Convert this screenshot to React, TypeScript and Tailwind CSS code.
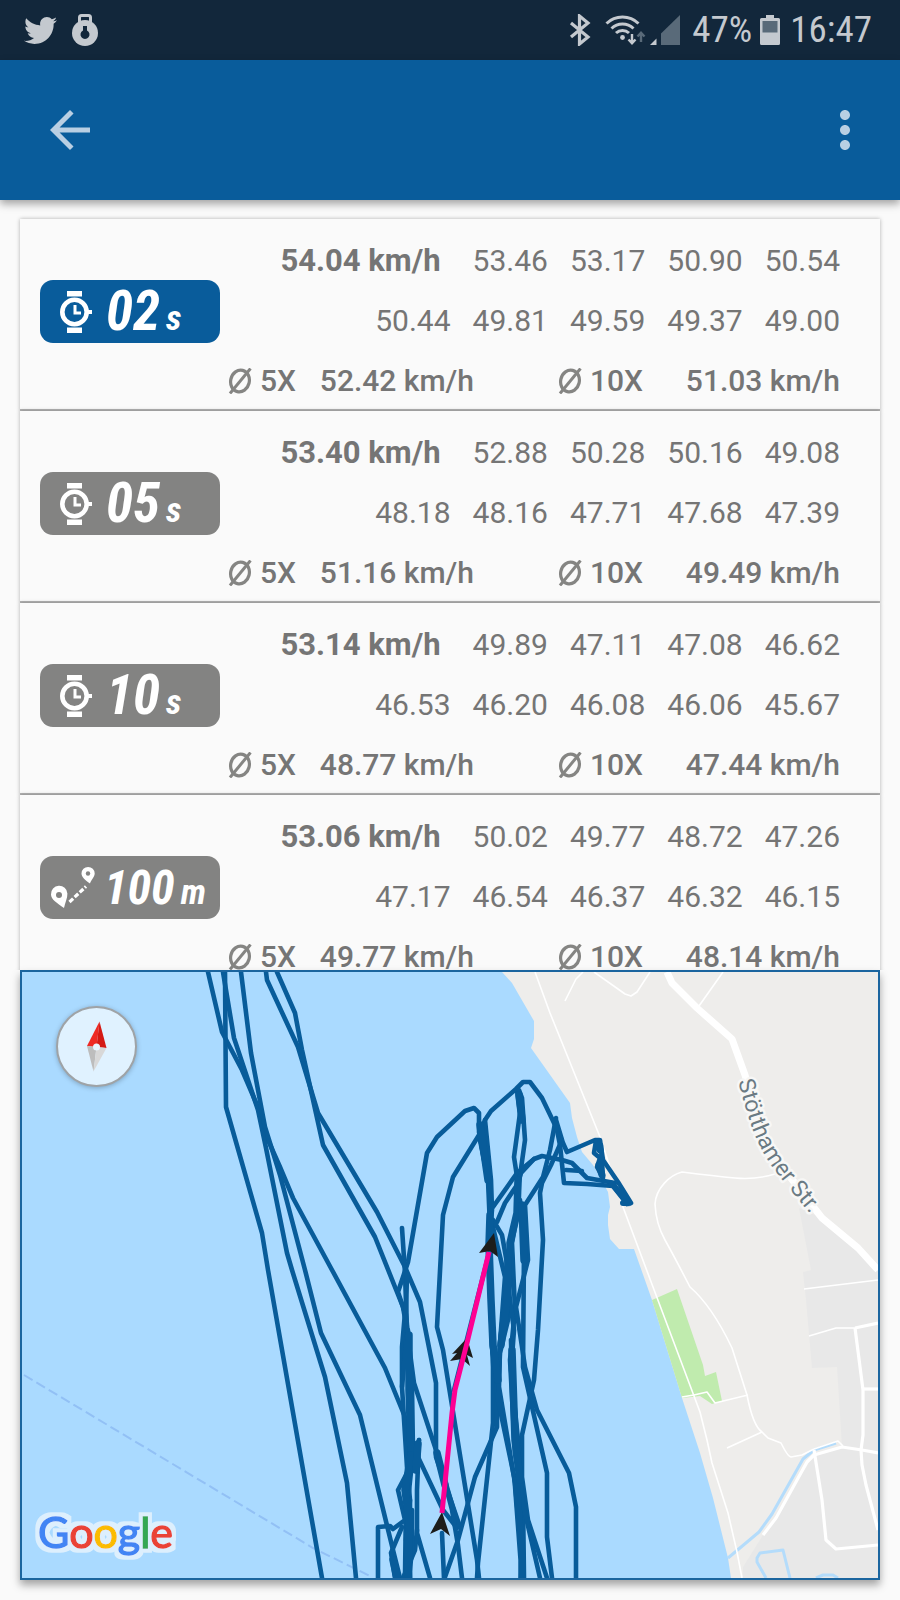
import React from 'react';
import { FaTwitter } from 'react-icons/fa';
import { MdArrowBack, MdMoreVert } from 'react-icons/md';

interface SpeedResult {
  id: string;
  kind: 'time' | 'distance';
  value: string;
  unit: string;
  active?: boolean;
  top: string;
  first: string[];
  second: string[];
  avg5: string;
  avg10: string;
}

const results: SpeedResult[] = [
  {
    id: '2s', kind: 'time', value: '02', unit: 's', active: true, top: '54.04 km/h',
    first: ['53.46', '53.17', '50.90', '50.54'],
    second: ['50.44', '49.81', '49.59', '49.37', '49.00'],
    avg5: '52.42 km/h', avg10: '51.03 km/h',
  },
  {
    id: '5s', kind: 'time', value: '05', unit: 's', top: '53.40 km/h',
    first: ['52.88', '50.28', '50.16', '49.08'],
    second: ['48.18', '48.16', '47.71', '47.68', '47.39'],
    avg5: '51.16 km/h', avg10: '49.49 km/h',
  },
  {
    id: '10s', kind: 'time', value: '10', unit: 's', top: '53.14 km/h',
    first: ['49.89', '47.11', '47.08', '46.62'],
    second: ['46.53', '46.20', '46.08', '46.06', '45.67'],
    avg5: '48.77 km/h', avg10: '47.44 km/h',
  },
  {
    id: '100m', kind: 'distance', value: '100', unit: 'm', top: '53.06 km/h',
    first: ['50.02', '49.77', '48.72', '47.26'],
    second: ['47.17', '46.54', '46.37', '46.32', '46.15'],
    avg5: '49.77 km/h', avg10: '48.14 km/h',
  },
];

// GPS track segments in map coordinates
const tracks = [
  '208,972 222,1032 242,1070 260,1112 268,1140 280,1167 293,1198 332,1270 385,1368 405,1417 408,1440',
  '225,972 226,1107 262,1233 268,1270 322,1578',
  '223,972 234,1038 258,1110 266,1148 287,1253 292,1270 325,1377 347,1483 356,1578',
  '241,972 251,1053 265,1127 280,1175 305,1270 321,1333 360,1415 393,1550 400,1578',
  '266,972 267,980 298,1047 318,1113 377,1212 405,1267 420,1302 436,1383 436,1457 460,1527',
  '277,972 295,1013 302,1050 323,1145 375,1237 403,1307 407,1330 414,1383 437,1453 458,1525',
  '402,1387 402,1347 405,1313 398,1292 408,1262 427,1153 437,1137 465,1111 474,1108 479,1113 479,1132 488,1180 490,1227 489,1267 493,1367 493,1423 478,1563 477,1578',
  '479,1578 477,1560 443,1350 437,1327 443,1215 453,1177 479,1135 485,1120 491,1111 516,1089 523,1082 530,1082 542,1098 555,1125 567,1152 595,1140 600,1140 603,1160 618,1182 631,1203',
  '517,1090 520,1113 514,1157 518,1183 517,1213 510,1243 507,1277 500,1343 499,1387 515,1483 522,1560 521,1578',
  '519,1090 522,1098 525,1140 519,1183 518,1210 512,1243 515,1310 510,1360 515,1453 523,1500 524,1578',
  '485,1120 491,1180 492,1210 489,1240 492,1347 497,1380 497,1427 475,1477 458,1540 445,1577',
  '480,1140 489,1185 490,1215 505,1277 500,1343 498,1380',
  '493,1207 517,1173 534,1159 542,1156 562,1160 572,1163 587,1178 615,1183',
  '497,1222 505,1203 517,1185 521,1173 534,1159',
  '493,1220 502,1235 510,1280 508,1320 500,1353 498,1400 519,1500',
  '556,1118 550,1150 543,1177 525,1205 528,1260 516,1307 525,1367 537,1410 569,1473 576,1507 576,1578',
  '556,1120 562,1140 551,1165 542,1183 540,1193 543,1240 538,1330 534,1380 522,1435 522,1477 528,1520 547,1578',
  '555,1120 560,1145 564,1183 587,1184 613,1186 627,1204',
  '566,1170 582,1171',
  '596,1141 594,1153 600,1158 597,1167 603,1178 601,1145',
  '520,1200 524,1250 523,1367 547,1473 547,1537 552,1578',
  '511,1340 512,1380 520,1470 522,1500 540,1578',
  '506,1270 514,1330 511,1370 519,1450',
  '402,1228 405,1273 407,1333 402,1387 407,1467 410,1500 406,1540',
  '407,1273 406,1313 412,1387 413,1453 408,1500 410,1578',
  '408,1330 410,1400 410,1453 406,1500 405,1578',
  '419,1440 414,1460 398,1490 405,1520 393,1529 390,1526 378,1527 378,1578',
  '419,1440 417,1490 417,1533 430,1578',
  '418,1457 443,1510 457,1528',
  '402,1527 391,1553 395,1578',
  '417,1530 415,1550 403,1578',
  '410,1500 410,1578',
  '412,1510 412,1550 409,1578',
  '437,1453 452,1510 458,1545 462,1578',
  '442,1533 444,1578',
  '489,1253 466,1343 454,1390',
];

// Stretches sailed so often that the lines merge
const busyTracks = [
  '490,1215 489,1245 491,1300 493,1345 498,1380',
  '480,1125 488,1180',
  '519,1095 522,1120',
  '518,1180 517,1213 510,1243 511,1275',
  '522,1205 524,1260',
  '508,1260 507,1300 501,1345',
  '409,1335 409,1390 411,1450',
  '411,1455 405,1490 409,1520 408,1575',
  '437,1453 445,1485',
  '516,1480 522,1560 522,1578',
  '512,1350 515,1440 520,1480',
  '393,1560 397,1578',
  '418,1444 416,1470',
];

const roads = [
  '535,972 550,1013 567,1055 600,1137 623,1207 653,1287 694,1396 700,1412 707,1440 712,1463 728,1513 737,1552 742,1578',
  '565,1001 576,979 583,972',
  '594,972 618,989 625,994 631,996 637,992 650,972',
  '699,1006 723,972',
  '804,1289 878,1280',
  '809,1336 836,1328 856,1328',
  '682,1397 694,1395 707,1392 715,1403 748,1395',
  '727,1448 762,1432',
];

const wideRoads = [
  '855,1328 878,1323',
  '855,1328 863,1390 863,1435 861,1450 862,1465 866,1485 878,1530',
  '863,1389 878,1389',
  '763,1535 776,1518 807,1462 814,1455 842,1447 862,1450 878,1453',
  '814,1450 822,1500 826,1540 836,1549 878,1545',
];

function WatchIcon() {
  return (
    <svg width="34" height="44" viewBox="0 0 34 44" fill="none" stroke="white" className="shrink-0" aria-hidden="true">
      <path d="M7 1h15v5.500H7zM7 37.500h15V43H7z" fill="white" stroke="none" />
      <circle cx="14.500" cy="22" r="12.200" strokeWidth="4.600" />
      <path d="M27 22h5" strokeWidth="4" />
      <path d="M15 15v8h6" strokeWidth="3" />
    </svg>
  );
}

function RouteIcon() {
  return (
    <svg width="46" height="44" viewBox="0 0 46 44" fill="none" className="shrink-0" aria-hidden="true">
      <path d="M14 42C7 37 1 33.500 1 28.500a8.200 8.200 0 0 1 16.400-1C17.600 32 15 37 14 42z" fill="white" />
      <circle cx="9" cy="29" r="3" fill="#838382" />
      <path d="M40 17.500C35 14 31.500 11 31.500 7.500a6.600 6.600 0 0 1 13.200 0C44.700 11 41 14 40 17.500z" fill="white" />
      <circle cx="38" cy="7.500" r="2.200" fill="#838382" />
      <path d="M19.500 36L36 20.500" stroke="white" strokeWidth="3.200" strokeDasharray="5 2" />
    </svg>
  );
}

function AverageIcon() {
  return (
    <svg width="24" height="26" viewBox="0 0 24 26" fill="none" stroke="#858583" className="shrink-0" aria-hidden="true">
      <ellipse cx="12" cy="13" rx="9.300" ry="11" strokeWidth="3.200" transform="rotate(14 12 13)" />
      <path d="M2 25.500L22.500 .5" strokeWidth="3" />
    </svg>
  );
}

function StatusBar() {
  return (
    <div className="flex h-[60px] shrink-0 items-center bg-[#12273b] pl-6 pr-7 text-[#c4c9cf]">
      <FaTwitter className="h-[33px] w-[33px]" />
      <svg width="26" height="32" viewBox="0 0 26 32" className="ml-[15px]" aria-hidden="true">
        <path d="M7.500 9V3.500a2 2 0 0 1 2-2h7a2 2 0 0 1 2 2V9" fill="none" stroke="currentColor" strokeWidth="3" />
        <circle cx="13" cy="19" r="13" fill="currentColor" />
        <path d="M11 12h4v4.500a4.500 4.500 0 1 1-4 0z" fill="#12273b" />
      </svg>
      <div className="ml-auto flex items-center">
        <svg width="22" height="32" viewBox="0 0 22 32" fill="none" stroke="currentColor" strokeWidth="3.200" aria-hidden="true">
          <path d="M2 9l17 14-8.500 7V2L19 9 2 23" />
        </svg>
        <svg width="42" height="32" viewBox="0 0 42 32" fill="none" stroke="currentColor" className="ml-3.5" aria-hidden="true">
          <path d="M1.500 9.500a23 23 0 0 1 32 0M6.500 14.500a16 16 0 0 1 22 0M11 19a9.500 9.500 0 0 1 13 0" strokeWidth="3" />
          <circle cx="17.500" cy="23.500" r="2.400" fill="currentColor" stroke="none" />
          <path d="M27 20v9M23.500 25.500l3.500 3.700 3.500-3.700" strokeWidth="2.400" />
          <path d="M36 28v-9M32.500 22.500l3.500-3.700 3.500 3.700" strokeWidth="2.400" stroke="#596a79" />
        </svg>
        <svg width="30" height="30" viewBox="0 0 30 30" className="ml-[3px]" aria-hidden="true">
          <path d="M0 30l6.500-6.500V30z" fill="currentColor" />
          <path d="M11 18.500L30 0v30H11z" fill="#596a79" />
        </svg>
        <span className="ml-3 font-['Roboto_Condensed','Roboto',sans-serif] text-[37px] leading-10">47%</span>
        <svg width="20" height="30" viewBox="0 0 20 30" className="ml-2" aria-hidden="true">
          <path d="M6 0h8v3h4.500A1.500 1.500 0 0 1 20 4.500v24a1.500 1.500 0 0 1-1.500 1.500h-17A1.500 1.500 0 0 1 0 28.500v-24A1.500 1.500 0 0 1 1.500 3H6z" fill="currentColor" />
          <path d="M2.500 6h15v11.500h-15z" fill="#596a79" />
        </svg>
        <span className="ml-2.5 font-['Roboto_Condensed','Roboto',sans-serif] text-[37px] leading-10">16:47</span>
      </div>
    </div>
  );
}

function ResultCard({ result }: { result: SpeedResult }) {
  const distance = result.kind === 'distance';
  return (
    <li className="relative h-48 shrink-0 border-b-2 border-[#b4b4b4] bg-[#fafafa] pl-5 pr-10 pt-3 shadow-[0_0_4px_rgba(0,0,0,0.3)]">
      <div className="flex justify-between">
        <div
          className={`mt-[49px] flex h-[63px] w-[180px] shrink-0 items-center rounded-[13px] text-white ${
            result.active ? 'bg-[#095c9b]' : 'bg-[#838382]'
          } ${distance ? 'gap-2 pl-2.5' : 'gap-3 pl-5'}`}
        >
          {distance ? <RouteIcon /> : <WatchIcon />}
          <p className="flex items-baseline gap-1.5 font-['Roboto_Condensed','Roboto',sans-serif] font-bold italic">
            <span className={distance ? 'text-[48px] leading-none' : 'text-[55px] leading-none'}>{result.value}</span>
            <span className="text-[35px] leading-none">{result.unit}</span>
          </p>
        </div>
        <div className="-ml-2 text-[30px] leading-[60px] text-[#757575]">
          <p className="flex justify-end gap-[22px]">
            <strong className="mr-2.5 text-[31px] font-bold">{result.top}</strong>
            {result.first.map(v => <span key={v}>{v}</span>)}
          </p>
          <p className="flex justify-end gap-[22px]">
            {result.second.map(v => <span key={v}>{v}</span>)}
          </p>
          <p className="flex justify-end gap-[84px] font-medium">
            <span className="flex w-[246px] items-center gap-2">
              <AverageIcon />
              <span>5X</span>
              <span className="ml-auto">{result.avg5}</span>
            </span>
            <span className="flex w-[282px] items-center gap-2">
              <AverageIcon />
              <span>10X</span>
              <span className="ml-auto">{result.avg10}</span>
            </span>
          </p>
        </div>
      </div>
    </li>
  );
}

function TrackMap() {
  return (
    <section className="relative mx-5 mb-5 h-[610px] shrink-0 border-2 border-[#1b659f] bg-[#aadaff] shadow-[0_5px_8px_rgba(0,0,0,0.35)]">
      <svg viewBox="22 972 856 606" preserveAspectRatio="xMidYMid slice" className="h-full w-full" role="img" aria-label="Track map">
        <defs>
          <filter id="halo" x="-10%" y="-20%" width="120%" height="140%">
            <feMorphology in="SourceAlpha" operator="dilate" radius="4" result="wide" />
            <feFlood floodColor="#ddeffd" />
            <feComposite in2="wide" operator="in" />
            <feMerge>
              <feMergeNode />
              <feMergeNode in="SourceGraphic" />
            </feMerge>
          </filter>
        </defs>
        {/* Land, built-up area, park */}
        <path d="M502 972L512 983 534 1021V1039L531 1048 570 1103 572 1118 577 1137 582 1152 593 1165 600 1177 608 1192 610 1207 608 1215V1225L610 1239 619 1249H634L652 1300 682 1398 700 1453 713 1498 728 1558 731 1578H878V972z" fill="#eeedeb" />
        <path d="M799 1208L811 1270 803 1272 806 1300 812 1368 837 1367 842 1447 814 1455 763 1535 743 1567V1578H878V1270L822 1218z" fill="#e8e8e8" />
        <path d="M652 1300L677 1289 703 1365 705 1376 716 1372 722 1401 712 1404 700 1396 682 1398z" fill="#c0ebae" />
        <g fill="none" stroke="#b4dcfb" strokeWidth="3" strokeLinejoin="round">
          <path d="M728 1558L759 1532 772 1514 803 1459 814 1450 836 1443" />
          <path d="M766 1578L757 1562V1558L760 1553 783 1550 790 1578M816 1578L823 1575H833L838 1578" />
        </g>
        {/* Roads */}
        <g fill="none" stroke="white" strokeLinejoin="round">
          {roads.map(points => <polyline key={points} points={points} strokeWidth="1.600" />)}
          {wideRoads.map(points => <polyline key={points} points={points} strokeWidth="3.200" />)}
          <path d="M775 1174Q755 1180 735 1178T682 1172C670 1175 656 1188 655 1204Q656 1224 665 1240T690 1287Q712 1306 732 1348L747 1395Q753 1426 762 1432L768 1438 781 1443Q788 1457 791 1457L802 1455 814 1449 838 1441 843 1446" strokeWidth="1.600" />
          <path d="M667 972L672 983 697 1008 732 1039 745 1075 760 1127 787 1173 822 1218 858 1248 878 1270" strokeWidth="7" />
        </g>
        <path id="street" d="M738 1081C746 1108 750 1128 762 1150S786 1184 825 1232" fill="none" />
        <text fontSize="23" fill="#6a7a83" stroke="#f7f7f6" strokeWidth="5" strokeLinejoin="round" paintOrder="stroke">
          <textPath href="#street">Stötthamer Str.</textPath>
        </text>
        <path d="M24 1375L313 1548 372 1577" fill="none" stroke="#92c0f5" strokeWidth="2" strokeDasharray="10 4.400" />
        {/* Tracks */}
        <g fill="none" stroke="#085c9a" strokeWidth="4.600" strokeLinecap="round" strokeLinejoin="round">
          {tracks.map(points => <polyline key={points} points={points} />)}
          {busyTracks.map(points => <polyline key={points} points={points} strokeWidth="7.500" />)}
          <path d="M612 1184L629 1203M623 1203h6" strokeWidth="6" />
          <path d="M597 1142l3 8M599 1165l3 10" strokeWidth="7" />
        </g>
        {/* Selected run with direction arrows */}
        <g fill="#1d1d1b">
          <path d="M494 1233L498 1257 490 1251 479 1253z" />
          <path d="M467 1338L473 1358 467 1355 470 1366 462 1359 450 1361 457 1353 452 1354z" />
          <path d="M442 1512L450 1536 441 1529 430 1534z" />
        </g>
        <polyline points="442,1513 452,1413 455,1390 467,1343 489,1252" fill="none" stroke="#ff0093" strokeWidth="5" />
        <text x="38" y="1548" fontSize="43" strokeWidth="1.400" filter="url(#halo)" className="font-['Lato',sans-serif]">
          <tspan fill="#4285f4" stroke="#4285f4">G</tspan>
          <tspan fill="#ea4335" stroke="#ea4335">o</tspan>
          <tspan fill="#fbbc05" stroke="#fbbc05">o</tspan>
          <tspan fill="#4285f4" stroke="#4285f4">g</tspan>
          <tspan fill="#34a853" stroke="#34a853">l</tspan>
          <tspan fill="#ea4335" stroke="#ea4335">e</tspan>
        </text>
      </svg>
      <button
        type="button"
        aria-label="Reset map to north"
        className="absolute left-[34px] top-[34px] h-[81px] w-[81px] rounded-full border-2 border-[#9fa3a6] bg-[#e0f2ff] shadow-[0_1px_5px_rgba(0,0,0,0.25)]"
      >
        <svg viewBox="0 0 77 77" className="h-full w-full" aria-hidden="true">
          <path d="M41.500 13.500L29 38l9.500 1z" fill="#ee2a24" />
          <path d="M41.500 13.500L48.500 40l-10-1z" fill="#d41a14" />
          <path d="M29 38l9.500 1L35.500 63.500z" fill="#bdbdbd" />
          <path d="M48.500 40l-10-1-3 24.500z" fill="#d8d8d8" />
          <circle cx="38.500" cy="39" r="3.500" fill="#e8f5ff" />
        </svg>
      </button>
    </section>
  );
}

export default function App() {
  return (
    <div className="flex h-screen flex-col overflow-hidden bg-[#fafafa] font-['Roboto',sans-serif]">
      <StatusBar />
      <header className="relative z-10 flex h-[140px] shrink-0 items-center justify-between bg-[#095c9b] pl-10 pr-[25px] text-[#b9cfe3] shadow-[0_4px_8px_rgba(0,0,0,0.35)]">
        <button type="button" aria-label="Back">
          <MdArrowBack className="h-[60px] w-[60px]" />
        </button>
        <button type="button" aria-label="More options">
          <MdMoreVert className="h-[60px] w-[60px]" />
        </button>
      </header>
      <main className="flex min-h-0 flex-1 flex-col">
        <ul className="flex min-h-0 flex-1 flex-col overflow-hidden px-5 pt-[19px]">
          {results.map(r => <ResultCard key={r.id} result={r} />)}
        </ul>
        <TrackMap />
      </main>
    </div>
  );
}
